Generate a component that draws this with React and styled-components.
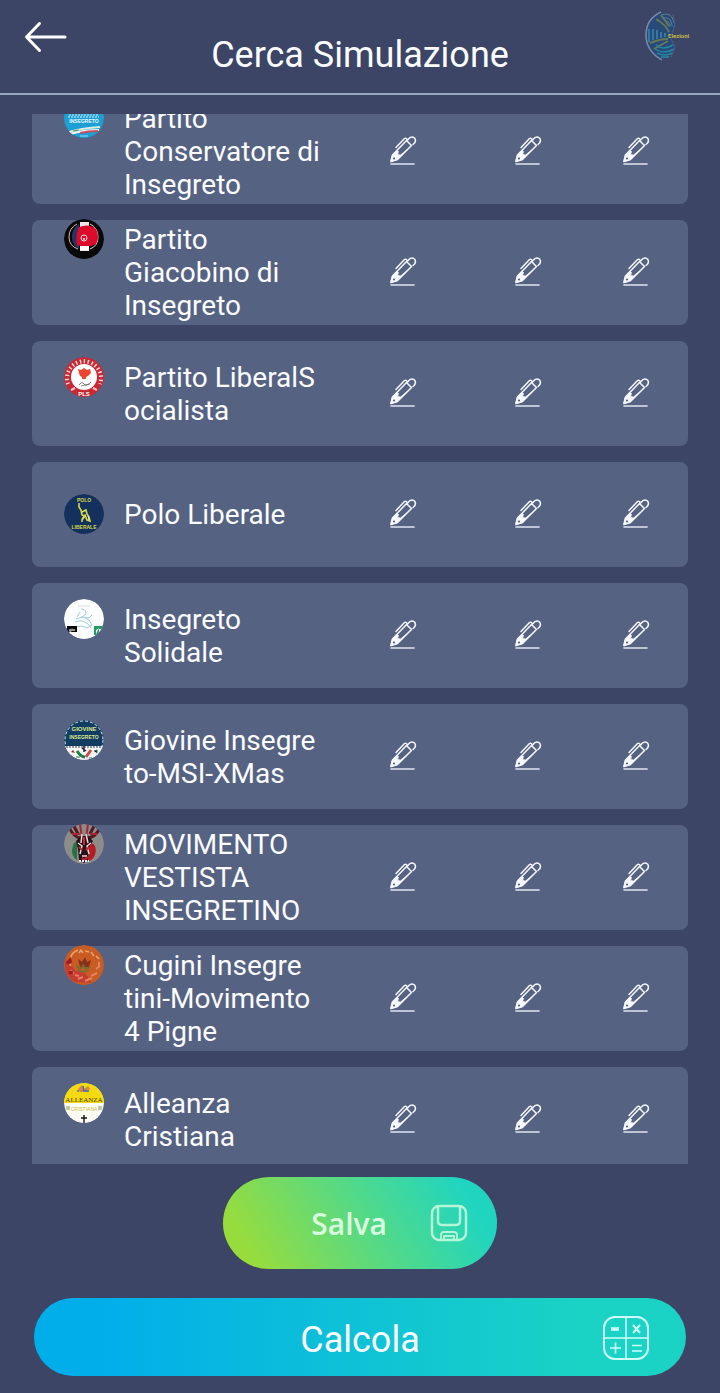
import React, { useLayoutEffect, useRef } from "react";
import styled, { createGlobalStyle } from "styled-components";

const parties = [
  { name: "Partito\nConservatore di\nInsegreto", logo: "conservatore" },
  { name: "Partito\nGiacobino di\nInsegreto", logo: "giacobino" },
  { name: "Partito LiberalS\nocialista", logo: "liberalsocialista" },
  { name: "Polo Liberale", logo: "polo" },
  { name: "Insegreto\nSolidale", logo: "solidale" },
  { name: "Giovine Insegre\nto-MSI-XMas", logo: "giovine" },
  { name: "MOVIMENTO\nVESTISTA\nINSEGRETINO", logo: "vestista" },
  { name: "Cugini Insegre\ntini-Movimento\n4 Pigne", logo: "cugini" },
  { name: "Alleanza\nCristiana", logo: "alleanza" },
];

const fields = ["voti", "percentuale", "seggi"];

const emblems = {
  conservatore: (
    <>
      <circle cx="20" cy="20" r="20" fill="#1b9fd4" />
      <path d="M5 17h30M4 19h31" stroke="#d8f2fb" strokeWidth="1" strokeDasharray="2 1" />
      <text x="20" y="25" fontSize="5" fontWeight="700" fill="#e9f9ff" textAnchor="middle">INSEGRETO</text>
      <path d="M5 34q14-4 31-5" stroke="#dfeee0" strokeWidth="2" fill="none" />
      <path d="M6 36q14-4 29-4" stroke="#f5f5f5" strokeWidth="2" fill="none" />
      <path d="M16 35q8-2 18-2" stroke="#c8505c" strokeWidth="2" fill="none" />
      <path d="M9 33l6-1" stroke="#3d9560" strokeWidth="1" />
      <path d="M16 38h8" stroke="#9adcf2" strokeWidth="1" />
    </>
  ),
  giacobino: (
    <>
      <circle cx="20" cy="20" r="20" fill="#090909" />
      <path d="M16 3h9v29h-9z" fill="#f1e9e9" />
      <path d="M15 5Q8 9 8 18t7 12z" fill="#25355f" />
      <path d="M13 5Q5 9 5 18t9 12" stroke="#e3b3ac" strokeWidth="1" fill="none" />
      <path d="M26 5q8 4 8 13t-8 12" stroke="#f0d4d2" strokeWidth="1" fill="none" />
      <path d="M15 8q10-4 17 2 4 8 0 15-9 5-19 1-2-9 2-18z" fill="#dc0b2a" />
      <path d="M16 27h9v4h-9z" fill="#fafafa" />
      <circle cx="20" cy="19" r="3" fill="none" stroke="#f8dfe2" strokeWidth="1" />
      <circle cx="20" cy="20" r="1" fill="#fff" />
    </>
  ),
  liberalsocialista: (
    <>
      <circle cx="20" cy="20" r="20" fill="#c62b35" />
      <path d="M4 27A17 17 0 1 1 36 27" fill="none" stroke="#f5d6d7" strokeWidth="4" strokeDasharray="1.5 2.500" />
      <path d="M7 33l4-2M29 31l4 2" stroke="#f0c4c8" strokeWidth="2" />
      <circle cx="20" cy="20" r="13" fill="#fff" />
      <text x="20" y="39" fontSize="6" fontWeight="700" fill="#fff" textAnchor="middle">PLS</text>
      <path d="M15 16l-1-4 3 1 3-2 3 2 3-1 1 4-3 3-2 1v2h-4v-2l-2-1z" fill="#eb462f" />
      <path d="M15 28q3-4 5-1t7-2M17 29l9-2" stroke="#555" strokeWidth=".7" fill="none" />
    </>
  ),
  polo: (
    <>
      <circle cx="20" cy="20" r="20" fill="#14305c" />
      <text x="20" y="8" fontSize="5" fontWeight="700" fill="#d8da4b" textAnchor="middle">POLO</text>
      <path d="M15 9v4l2 3 1 5 3 1-3 4v2M18 18l4-2 1 4 2 3 1 4-3-1-2-5-3 4" stroke="#d8da4b" strokeWidth="1.6" fill="none" />
      <path d="M24 22l1 4" stroke="#f2ecb0" strokeWidth="1" />
      <text x="20" y="35" fontSize="5" fontWeight="700" fill="#d8da4b" textAnchor="middle">LIBERALE</text>
    </>
  ),
  solidale: (
    <>
      <circle cx="20" cy="20" r="20" fill="#fdfefe" />
      <path d="M14 7h12" stroke="#c4cfd4" strokeWidth="1" strokeDasharray="1 .6" />
      <path d="M17 10q5 0 5 5l-4 3 7 1 3-3M12 20l7-2 6 3 3 5-5 3-5-2-6 1M11 23q7-3 13 2l3 4M16 13l-3 5" stroke="#9fcbd9" strokeWidth="1" fill="none" />
      <path d="M3 27h10v6H3z" fill="#080808" />
      <text x="8" y="32" fontSize="4" fontWeight="700" fill="#fff" textAnchor="middle">gio</text>
      <path d="M30 27h9v9h-9z" fill="#229b63" />
      <path d="M32 35v-4l3-2M35 30h4v5h-4z" fill="#eef8f2" />
    </>
  ),
  giovine: (
    <>
      <circle cx="20" cy="20" r="20" fill="#f5f5f5" />
      <path d="M0 26V0h40v26z" fill="#123d63" />
      <circle cx="20" cy="20" r="19" fill="none" stroke="#dfe8ef" strokeWidth="1" strokeDasharray="3 2" />
      <text x="20" y="11" fontSize="6" fontWeight="700" fill="#dce78b" textAnchor="middle">GIOVINE</text>
      <text x="20" y="19" fontSize="5" fontWeight="700" fill="#dce78b" textAnchor="middle">INSEGRETO</text>
      <path d="M2 27h36" stroke="#929aa1" strokeWidth="2" strokeDasharray="2 1" />
      <path d="M7 32l2-2 2 3z" fill="#a02e2b" />
      <path d="M13 31q4 6 8 6" stroke="#1f7b49" strokeWidth="3" fill="none" />
      <path d="M20 25v7M18 28l4 3" stroke="#20293a" strokeWidth="1.5" />
      <path d="M22 37l5-7" stroke="#ca4b48" strokeWidth="3" />
      <path d="M30 31l3-1v3M12 37h4M25 38h3" stroke="#347c54" strokeWidth="1" />
    </>
  ),
  vestista: (
    <>
      <circle cx="20" cy="20" r="20" fill="#8c8c89" />
      <path d="M10 19q-5 12 3 17V18z" fill="#247344" />
      <path d="M25 18q9 2 6 13-3 6-7 6z" fill="#b91b24" />
      <path d="M5 3q5 11 12 11M36 4q-5 10-13 10M9 0l5 10M31 0l-5 10" stroke="#591720" strokeWidth="3" fill="none" />
      <path d="M16 0l2 14M24 0l-2 14M8 10h8M33 10h-7" stroke="#a32835" strokeWidth="2" fill="none" />
      <path d="M12 17l5-5h7l5 5-4 6-1 13-4 3-5-3-1-11z" fill="#251319" />
      <path d="M18 10l-1 9M22 10l2 9M14 19l4 3-2 8M27 19l-4 3 2 8M18 32h5" stroke="#efdada" strokeWidth="1.5" fill="none" />
      <path d="M20 13v8M15 23l3 3M25 23l-3 3M18 34l2 2 4-3" stroke="#cc2433" strokeWidth="2" fill="none" />
      <path d="M15 37h10" stroke="#f0f0f0" strokeWidth="2" strokeDasharray="2 1" />
    </>
  ),
  cugini: (
    <>
      <circle cx="20" cy="20" r="20" fill="#c85c22" />
      <path d="M2 14Q-2 30 11 37l17 1-7-10-9-2z" fill="#c43c30" />
      <path d="M6 14q2-7 8-9M15 8l2-3 2 3M21 6l4 1M27 7l3 4M32 11l3 3" stroke="#e9a574" strokeWidth="1.5" fill="none" />
      <path d="M5 18l2 3M7 25l3 4M11 30l4 1M14 34l5-2M21 36l7-3M27 31l6-3M32 24l4-3M35 17v4" stroke="#e58265" strokeWidth="2" />
      <path d="M14 14l4 3 3-5 2 5 4-2-2 7h-9z" fill="#8a2f1c" />
      <path d="M12 21l5 3 2-4 3 4 4-2M14 25l5 2 6-2" stroke="#6e7133" strokeWidth="1.5" fill="none" />
      <path d="M3 19l3-4 1 3M5 28l4-1" stroke="#a21c23" strokeWidth="3" />
    </>
  ),
  alleanza: (
    <>
      <circle cx="20" cy="20" r="20" fill="#fcfcf5" />
      <path d="M0 20V0h40v20z" fill="#f5d911" />
      <path d="M14 6l4-4 2 4 4-3 2 3-3 3h-7z" fill="#e4804c" />
      <path d="M14 7v2M19 3l1 5h5" stroke="#367fa4" strokeWidth="1.5" fill="none" />
      <text x="20" y="19" fontSize="7" fill="#4b430c" textAnchor="middle" fontFamily="Liberation Serif, serif">ALLEANZA</text>
      <path d="M2 23h4v4H2zM34 23h4v4h-4z" fill="#bec9a3" />
      <text x="20" y="28" fontSize="5" fill="#cdb93e" textAnchor="middle">CRISTIANA</text>
      <path d="M20 32v8M17 35h6" stroke="#171717" strokeWidth="1.4" />
    </>
  ),
};

const PencilIcon = () => (
  <svg width="28" height="30" viewBox="0 0 28 30" fill="none" stroke="#f6f8ff" strokeWidth="1.500" strokeLinejoin="round" strokeLinecap="round" aria-hidden="true">
    <path d="M2 28h23" stroke="#dfe5f2" strokeWidth="1.600" />
    <path d="M2 25.500L3.500 19 17.500 4.500l5 5L8.500 23.500z" />
    <path d="M3.500 19L8 14.500l1.500 1-1 3 3 .5 7-5.500L8.500 23.500 2 25.500z" fill="#f6f8ff" strokeWidth=".8" />
    <path d="M19 3.500q3-4 6.500-1.500 2.500 3.500-1.500 6.500" />
    <path d="M7 11.500l8.500-9q1.500-1 3 1.500" />
    <circle cx="5" cy="22.500" r="1.100" fill="#566281" stroke="none" />
  </svg>
);

const BackIcon = () => (
  <svg width="44" height="32" viewBox="0 0 44 32" fill="none" stroke="#fff" strokeWidth="3" strokeLinecap="round" strokeLinejoin="round" aria-hidden="true">
    <path d="M41 16H3M15.500 2.500L2.500 16l13 13.500" />
  </svg>
);

const SaveIcon = () => (
  <svg width="38" height="38" viewBox="0 0 38 38" fill="none" stroke="#b5f6d8" strokeWidth="2.400" strokeLinejoin="round" aria-hidden="true">
    <rect x="2" y="2" width="34" height="34" rx="7" />
    <path d="M8 2v15q0 4 4 4h14q4 0 4-4V2" />
    <path d="M11 36v-5q0-3 3-3h10q3 0 3 3v5M14 36v-4h10v4" strokeWidth="1.800" />
  </svg>
);

const CalculatorIcon = () => (
  <svg width="46" height="44" viewBox="0 0 46 44" fill="none" stroke="#cdfff8" strokeWidth="2" aria-hidden="true">
    <rect x="1" y="1" width="44" height="42" rx="11" />
    <path d="M23 1v42M1 22h44" strokeWidth="1.600" />
    <path d="M8 13h8" strokeWidth="3.600" />
    <path d="M30 9l7 8M37 9l-7 8" />
    <path d="M12.500 26.500v11M7 32h11M29 29.500h10M29 35h10" strokeWidth="1.700" />
  </svg>
);

const AppLogo = () => (
  <svg width="52" height="52" viewBox="0 0 52 52" fill="none" role="img" aria-label="Elezioni">
    <path d="M17 2Q2 9 2 25t17 25q10-5 12-13l-4-11 4-11Q26 3 17 2z" fill="#284a79" />
    <path d="M17 2Q2 9 2 25t16 25" stroke="#7b89a8" strokeWidth="1.500" />
    <path d="M17 5q11-4 13 8M19 8q8-2 9 8M22 11q4 0 4 6" stroke="#56809e" />
    <path d="M12 9q10 6 13 13M17 5l8 11M6 33q10-4 18-4M10 39l14-8" stroke="#687756" strokeWidth="2" />
    <path d="M5 19v13M9 19v11M13 20v9M17 22v6M21 23v4" stroke="#3a8bab" strokeWidth="1.500" />
    <path d="M12 35q7 6 17 0M11 39q9 6 19 0M13 43q8 4 15 0M17 47h8" stroke="#28869f" strokeWidth="1.500" />
    <path d="M25 14q8 2 3 9M29 4l2 13M27 29l4 8-4 10" stroke="#45668c" />
    <text x="24" y="28" fontSize="6" fontWeight="700" fill="#c1b84b">Elezioni</text>
  </svg>
);

const App = () => {
  const listRef = useRef(null);

  // the list opens slightly scrolled, under the header
  useLayoutEffect(() => {
    listRef.current.scrollTop = 15;
  }, []);

  return (
    <Page>
      <GlobalStyle />
      <Header>
        <BackButton type="button" aria-label="Indietro">
          <BackIcon />
        </BackButton>
        <Title>Cerca Simulazione</Title>
        <AppLogo />
      </Header>

      <List ref={listRef}>
        {parties.map((party) => (
          <Row key={party.logo}>
            <Party>
              <Emblem viewBox="0 0 40 40" aria-hidden="true">
                {emblems[party.logo]}
              </Emblem>
              <Name>{party.name}</Name>
            </Party>
            {fields.map((field) => (
              <EditButton key={field} type="button" aria-label={`Modifica ${field}`}>
                <PencilIcon />
              </EditButton>
            ))}
          </Row>
        ))}
      </List>

      <Footer>
        <SaveButton type="button">
          <SaveLabel>Salva</SaveLabel>
          <SaveIcon />
        </SaveButton>
        <CalculateButton type="button">
          <CalculateLabel>Calcola</CalculateLabel>
          <CalculatorIcon />
        </CalculateButton>
      </Footer>
    </Page>
  );
};

const GlobalStyle = createGlobalStyle`
  * {
    box-sizing: border-box;
  }

  body {
    margin: 0;
    background: #3c4565;
    color: #fafcff;
    font-family: Roboto, sans-serif;
  }

  button {
    border: 0;
    padding: 0;
    background: none;
    color: inherit;
    font-family: inherit;
    cursor: pointer;
  }
`;

const Page = styled.div`
  display: flex;
  flex-direction: column;
  height: 100vh;
`;

const Header = styled.header`
  display: grid;
  grid-template-columns: 52px 1fr 52px;
  align-items: start;
  padding: 10px 24px 16px;
  border-bottom: 2px solid #98a7bd;
`;

const BackButton = styled.button`
  display: flex;
  padding-top: 11px;
`;

const Title = styled.h1`
  margin: 0;
  padding-top: 23px;
  font-size: 36px;
  line-height: 44px;
  font-weight: 400;
  text-align: center;
`;

const List = styled.ul`
  flex: 1;
  min-height: 0;
  margin: 19px 32px 0;
  padding: 0;
  overflow-y: auto;
  scrollbar-width: none;
  list-style: none;
`;

const Row = styled.li`
  display: grid;
  grid-template-columns: 302fr 138fr 112fr 104fr;
  align-content: center;
  align-items: center;
  height: 105px;
  margin-bottom: 16px;
  border-radius: 8px;
  background: #566281;
`;

const Party = styled.div`
  display: flex;
  align-items: flex-start;
  gap: 20px;
  padding-left: 32px;
`;

const Emblem = styled.svg`
  flex: none;
  width: 40px;
  height: 40px;
  border-radius: 50%;
  font-family: "Liberation Sans", sans-serif;
`;

const Name = styled.span`
  padding: 4px 0;
  font-size: 28px;
  line-height: 33px;
  white-space: pre;
`;

const EditButton = styled.button`
  display: flex;
  justify-content: center;
  padding-bottom: 2px;
`;

const Footer = styled.footer`
  display: flex;
  flex-direction: column;
  align-items: center;
  gap: 29px;
  padding: 13px 34px 17px;
`;

const SaveButton = styled.button`
  display: flex;
  align-items: center;
  justify-content: flex-end;
  gap: 43px;
  width: 274px;
  height: 92px;
  padding-right: 29px;
  border-radius: 46px;
  background: linear-gradient(60deg, #98dc3c 10%, #50d98b 55%, #20d5c0 88%);
`;

const SaveLabel = styled.span`
  color: #d9fbdf;
  font-family: "Open Sans", sans-serif;
  font-size: 30px;
  font-weight: 600;
`;

const CalculateButton = styled.button`
  display: grid;
  grid-template-columns: 46px 1fr 46px;
  align-items: center;
  width: 100%;
  height: 78px;
  padding: 2px 37px 0;
  border-radius: 39px;
  background: linear-gradient(90deg, #02aeea 10%, #1bd3c4 85%);
`;

const CalculateLabel = styled.span`
  grid-column: 2;
  padding-top: 4px;
  font-size: 36px;
  line-height: 44px;
`;

export default App;
